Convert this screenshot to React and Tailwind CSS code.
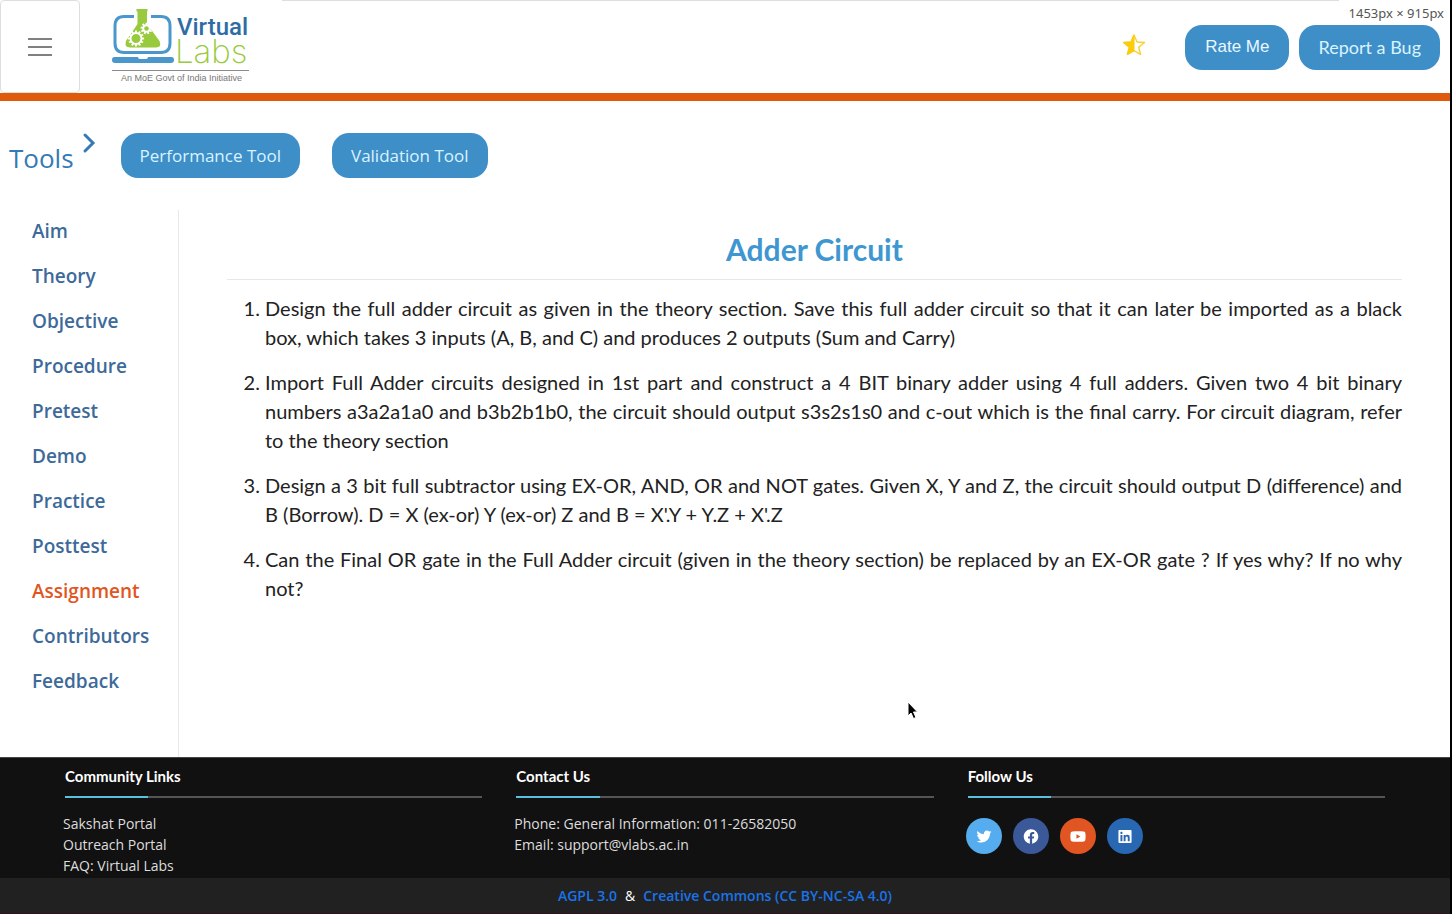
import { FaTwitter, FaFacebook, FaYoutube, FaLinkedin } from "react-icons/fa";

const navItems = [
  "Aim", "Theory", "Objective", "Procedure", "Pretest", "Demo",
  "Practice", "Posttest", "Assignment", "Contributors", "Feedback",
];

const questions = [
  "Design the full adder circuit as given in the theory section. Save this full adder circuit so that it can later be imported as a black box, which takes 3 inputs (A, B, and C) and produces 2 outputs (Sum and Carry)",
  "Import Full Adder circuits designed in 1st part and construct a 4 BIT binary adder using 4 full adders. Given two 4 bit binary numbers a3a2a1a0 and b3b2b1b0, the circuit should output s3s2s1s0 and c-out which is the final carry. For circuit diagram, refer to the theory section",
  "Design a 3 bit full subtractor using EX-OR, AND, OR and NOT gates. Given X, Y and Z, the circuit should output D (difference) and B (Borrow). D = X (ex-or) Y (ex-or) Z and B = X'.Y + Y.Z + X'.Z",
  "Can the Final OR gate in the Full Adder circuit (given in the theory section) be replaced by an EX-OR gate ? If yes why? If no why not?",
];

const socials = [
  { name: "Twitter", Icon: FaTwitter, color: "bg-[#55acee]" },
  { name: "Facebook", Icon: FaFacebook, color: "bg-[#3b5998]" },
  { name: "YouTube", Icon: FaYoutube, color: "bg-[#e15522]" },
  { name: "LinkedIn", Icon: FaLinkedin, color: "bg-[#2867b2]" },
];

function Gear({ cx, cy, r, teeth }) {
  return (
    <g fill="none" stroke="#fff" transform={`translate(${cx} ${cy})`}>
      <circle r={r} strokeWidth="2" />
      {Array.from({ length: teeth }, (_, i) => (
        <line key={i} x1="0" x2="0" y1={-r} y2={-r - 2.6} strokeWidth="1.9" transform={`rotate(${(360 / teeth) * i})`} />
      ))}
    </g>
  );
}

function Logo() {
  return (
    <svg width="138" height="76" viewBox="0 0 138 76" role="img" aria-label="Virtual Labs">
      <path d="M22 8.5H12Q3 8.5 3 18V35Q3 44.5 12 44.5H49Q58 44.5 58 35V18Q58 8.5 49 8.5H39" fill="none" stroke="#4a98cb" strokeWidth="3" />
      <path d="M24.5 1H35.5V3.5H35V16L47.5 33Q50 39.5 44 39.5H18Q12 39.5 14 33L25.5 16V3.5H24.5Z" fill="#97ca3d" />
      <Gear cx={24} cy={30.5} r={5.5} teeth={12} />
      <Gear cx={34.5} cy={20.5} r={3.3} teeth={9} />
      <path d="M2 49H26Q26 51 28 51H34Q36 51 36 49H60Q62 49 62 51.5V52Q62 55 59 55H3Q0 55 0 52V51.5Q0 49 2 49Z" fill="#4a98cb" />
      <text x="65" y="27" fontFamily="Roboto, sans-serif" fontSize="24" fontWeight="500" fill="#2e6da4">Virtual</text>
      <text x="63" y="55" fontFamily="Inter, sans-serif" fontSize="33" fontWeight="200" fill="#97ca3d">Labs</text>
      <path d="M0 62.5H137" stroke="#8a8a8a" />
      <text x="9" y="73" fontFamily="Liberation Sans, sans-serif" fontSize="9" fill="#777">An MoE Govt of India Initiative</text>
    </svg>
  );
}

function HalfStar() {
  return (
    <svg className="mr-[29px] mb-1 h-6 w-6" viewBox="0 0 24 24" role="img" aria-label="Rating" strokeLinejoin="round">
      <path d="M12 2L15 9L22.500 9.500L16.700 14.300L18.600 21.500L12 17.600L5.400 21.500L7.300 14.300L1.500 9.500L9 9Z" fill="#fff" stroke="#f8d030" strokeWidth="1.4" />
      <path d="M12 2L9 9L1.500 9.500L7.300 14.300L5.400 21.500L12 17.600Z" fill="#fbcc0a" stroke="#fbcc0a" strokeWidth="1" />
    </svg>
  );
}

function FooterColumn({ title, children }) {
  return (
    <section className="w-[452px] shrink pr-[34px]">
      <h2 className="h-[30px] font-['Lato',sans-serif] text-[15px] leading-[21px] font-bold text-white">{title}</h2>
      <div className="mb-[15px] h-[2px] bg-[#555]"><div className="h-full w-1/5 bg-[#5bc0de]" /></div>
      <div className="-ml-[2px] text-[14px] leading-[21px] text-[#ddd]">{children}</div>
    </section>
  );
}

export default function App() {
  return (
    <div className="relative flex min-h-screen flex-col border-r-2 border-black bg-white font-['Open_Sans',sans-serif]">
      <header className="flex h-[101px] items-stretch border-b-8 border-[#e05a0c]">
        <button aria-label="Open menu" className="flex w-20 flex-col items-center justify-center gap-[6px] rounded border border-[#dedede]">
          <span className="h-[2px] w-6 bg-[#808080]" />
          <span className="h-[2px] w-6 bg-[#808080]" />
          <span className="h-[2px] w-6 bg-[#808080]" />
        </button>
        <a href="#home" className="ml-8 pt-2"><Logo /></a>
        <div className="ml-8 flex flex-1 items-center justify-end gap-[10px] border-t border-[#dedede] pr-[10px]">
          <HalfStar />
          <button className="h-[45px] rounded-[17px] bg-[#3e8ec8] px-5 font-['Liberation_Sans',sans-serif] text-[17px] text-[#e8f8ff]">Rate Me</button>
          <button className="h-[45px] rounded-[17px] bg-[#3e8ec8] px-[19px] font-['Lato',sans-serif] text-[18px] text-[#d9f4ff]">Report a Bug</button>
        </div>
      </header>

      <div className="flex h-[109px] items-center text-[#337ab7]">
        <h2 className="mt-1 ml-[9px] text-[26px] leading-8">Tools</h2>
        <svg className="mr-[9px] mb-[26px] ml-[7px] h-6 w-4" viewBox="0 0 16 24" fill="none" stroke="#337ab7" strokeWidth="3" strokeLinecap="round" aria-hidden="true">
          <path d="M4 4L12 12L4 20" />
        </svg>
        <div className="ml-[15px] flex gap-8">
          <button className="h-[45px] rounded-[17px] bg-[#3e8ec8] px-[19px] text-[17px] text-[#d9f4ff]">Performance Tool</button>
          <button className="h-[45px] rounded-[17px] bg-[#3e8ec8] px-[19px] text-[17px] text-[#d9f4ff]">Validation Tool</button>
        </div>
      </div>

      <div className="flex flex-1">
        <nav className="w-[179px] shrink-0 border-r border-[#e8e8e8] pt-[7px] pl-8">
          <ul className="flex flex-col gap-4 text-[19px] leading-[29px] font-semibold text-[#3d6a99]">
            {navItems.map((item) => (
              <li key={item}>
                <a href={`#${item.toLowerCase()}`} className={item === "Assignment" ? "text-[#e0561e]" : ""}>{item}</a>
              </li>
            ))}
          </ul>
        </nav>
        <main className="flex-1 px-12 pt-[21px]">
          <h1 className="border-b border-[#e8e8e8] pb-3 text-center font-['Lato',sans-serif] text-[30px] leading-9 font-bold text-[#3e97d1]">Adder Circuit</h1>
          <ol className="mt-[14px] flex list-decimal flex-col gap-4 pl-[38px] text-justify font-['Lato',sans-serif] text-[20px] leading-[29px] text-[#222]">
            {questions.map((q) => <li key={q}>{q}</li>)}
          </ol>
        </main>
      </div>

      <footer>
        <div className="flex border-t border-[#444] bg-[#111] pt-[8px] pr-[31px] pb-[2px] pl-[65px]">
          <FooterColumn title="Community Links">
            <ul>
              <li><a href="#sakshat">Sakshat Portal</a></li>
              <li><a href="#outreach">Outreach Portal</a></li>
              <li><a href="#faq">FAQ: Virtual Labs</a></li>
            </ul>
          </FooterColumn>
          <FooterColumn title="Contact Us">
            <p>Phone: General Information: 011-26582050</p>
            <p>Email: support@vlabs.ac.in</p>
          </FooterColumn>
          <FooterColumn title="Follow Us">
            <div className="flex gap-[11px] pt-[5px]">
              {socials.map(({ name, Icon, color }) => (
                <a key={name} href={`#${name.toLowerCase()}`} aria-label={name} className={`flex h-9 w-9 items-center justify-center rounded-full text-white ${color}`}>
                  <Icon className="h-[15px] w-[16px]" />
                </a>
              ))}
            </div>
          </FooterColumn>
        </div>
        <div className="flex h-9 items-center justify-center gap-2 border-b border-[#30121c] bg-[#212121] text-[14px] font-semibold text-[#1a73e8]">
          <a href="#agpl">AGPL 3.0</a>
          <span className="font-normal text-white">&amp;</span>
          <a href="#cc">Creative Commons (CC BY-NC-SA 4.0)</a>
        </div>
      </footer>

      <div className="absolute top-0 right-0 h-6 bg-white pr-[6px] pl-[10px] font-['Noto_Sans',sans-serif] text-[13px] leading-[26px] text-[#555]">1453px × 915px</div>
      <svg className="absolute top-[701px] left-[907px]" width="12" height="19" viewBox="0 0 12 19" aria-hidden="true">
        <path d="M1 1V15L4 12L6.5 17.5L9 16.5L6.5 11H10.5Z" fill="#000" stroke="#fff" />
      </svg>
    </div>
  );
}
